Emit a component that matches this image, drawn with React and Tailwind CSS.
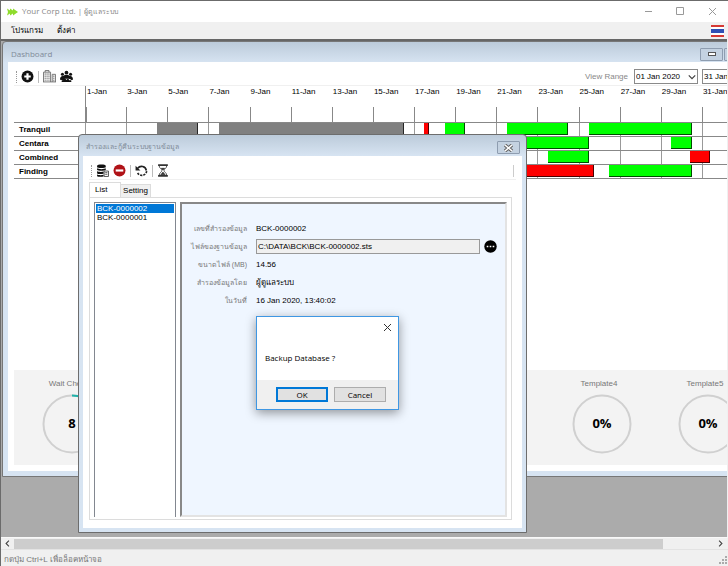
import React from 'react';

const days = ['1-Jan', '3-Jan', '5-Jan', '7-Jan', '9-Jan', '11-Jan', '13-Jan', '15-Jan', '17-Jan', '19-Jan', '21-Jan', '23-Jan', '25-Jan', '27-Jan', '29-Jan', '31-Jan'];

// from / to are days counted from the first column, the axis holds 32 days
const AXIS_DAYS = 32;
const rows = [
  {
    name: 'Tranquil',
    bars: [
      { from: 3.5, to: 5.5, color: 'bg-[#808080]' },
      { from: 6.5, to: 15.5, color: 'bg-[#808080]' },
      { from: 16.5, to: 16.75, color: 'bg-[#ff0000]' },
      { from: 17.5, to: 18.5, color: 'bg-[#00ff00]' },
      { from: 20.5, to: 23.5, color: 'bg-[#00ff00]' },
      { from: 24.5, to: 29.5, color: 'bg-[#00ff00]' },
    ],
  },
  {
    name: 'Centara',
    bars: [
      { from: 20.5, to: 24.5, color: 'bg-[#00ff00]' },
      { from: 28.5, to: 29.5, color: 'bg-[#00ff00]' },
    ],
  },
  {
    name: 'Combined',
    bars: [
      { from: 22.5, to: 24.5, color: 'bg-[#00ff00]' },
      { from: 29.4, to: 30.4, color: 'bg-[#ff0000]' },
    ],
  },
  {
    name: 'Finding',
    bars: [
      { from: 20.5, to: 24.75, color: 'bg-[#ff0000]' },
      { from: 25.5, to: 29.5, color: 'bg-[#00ff00]' },
    ],
  },
];

const gauges = [
  { label: 'Wait Check', value: '8', arc: 12 },
  {},
  {},
  {},
  {},
  { label: 'Template4', value: '0%', arc: 0 },
  { label: 'Template5', value: '0%', arc: 0 },
];

const Grip = () => <span className="h-3 border-l border-dotted border-[#999]" />;
const Separator = () => <span className="h-3 border-l border-[#bbb]" />;

const IconButton = ({ label, children }) => (
  <button aria-label={label} className="w-[13px] h-[13px] shrink-0">
    {children}
  </button>
);

const Logo = () => (
  <svg viewBox="0 0 22 16" className="w-[11px] h-2" fill="#8fdc2c">
    <path d="M0 1l6 4V1l6 4V1l10 7-10 7v-4l-6 4v-4l-6 4 2-7z" />
  </svg>
);

const AddIcon = () => (
  <svg viewBox="0 0 24 24" className="w-full h-full">
    <circle cx="12" cy="12" r="11" fill="#111" />
    <path d="M12 6v12M6 12h12" stroke="#fff" strokeWidth="4" />
  </svg>
);

const BuildingIcon = () => (
  <svg viewBox="0 0 24 24" className="w-full h-full" fill="none" stroke="#666" strokeWidth="1.6">
    <path d="M1 22V4h13v18M4 4V1h7v3M17 22V8h6v14M0 22h24" />
    <path d="M4 6v14M7.500 6v14M11 6v14M20 10v11" strokeDasharray="3 1" />
  </svg>
);

const PeopleIcon = () => (
  <svg viewBox="0 0 24 24" className="w-full h-full" fill="#111">
    <circle cx="12" cy="5" r="3.500" />
    <circle cx="4.500" cy="8" r="2.800" />
    <circle cx="19.500" cy="8" r="2.800" />
    <circle cx="8" cy="13" r="3" />
    <circle cx="16" cy="13" r="3" />
    <path d="M8 9h8v7H8zM0 18c0-5 2-7 5-7s4 1 4 4l-2 4zM24 18c0-5-2-7-5-7s-4 1-4 4l2 4zM3 22c0-5 2-6 5-6s4 2 4 3c0-1 1-3 4-3s5 1 5 6z" />
  </svg>
);

const DatabaseIcon = () => (
  <svg viewBox="0 0 24 24" className="w-full h-full">
    <path d="M2 3c0-3 16-3 16 0v3c0 2-16 2-16 0zM2 8c2 2 14 2 16 0v3c-1 2-15 2-16 0zM2 13c2 2 9 2 12 1v4C9 19 3 19 2 17zM2 19c2 2 8 2 12 1v3C9 24 3 24 2 22z" fill="#111" />
    <path d="M15 13h8v10h-8zM17 16h4M17 19h4" fill="#fff" stroke="#333" strokeWidth="1.500" />
  </svg>
);

const RemoveIcon = () => (
  <svg viewBox="0 0 24 24" className="w-full h-full">
    <circle cx="12" cy="12" r="11" fill="#b01217" />
    <path d="M5 12h14" stroke="#fff" strokeWidth="4" />
  </svg>
);

const RestoreIcon = () => (
  <svg viewBox="0 0 24 24" className="w-full h-full" fill="none" stroke="#222" strokeWidth="3">
    <path d="M5 8a9 9 0 0 1 16 4" />
    <path d="M21.500 13a9 9 0 0 1-17 3" strokeDasharray="4 2" />
    <path d="M1 3v9h9z" fill="#222" stroke="none" />
  </svg>
);

const HourglassIcon = () => (
  <svg viewBox="0 0 24 24" className="w-full h-full" fill="none" stroke="#333" strokeWidth="1.500">
    <path d="M2 2h18M2 22h18" strokeWidth="3" />
    <path d="M4 3c0 5 5 6 5 9s-5 4-5 9M18 3c0 5-5 6-5 9s5 4 5 9" />
    <path d="M8 8h6l-3 3zM7 20l4-5 4 5z" fill="#333" />
  </svg>
);

const MoreIcon = () => (
  <svg viewBox="0 0 24 24" className="w-full h-full">
    <circle cx="12" cy="12" r="11.500" fill="#000" />
    <path d="M5 10.500h3v3H5zM10.500 10.500h3v3h-3zM16 10.500h3v3h-3z" fill="#fff" />
  </svg>
);

const Chevron = ({ className }) => (
  <svg viewBox="0 0 10 10" className={className} fill="none" stroke="#444" strokeWidth="1.600">
    <path d="M1 3l4 4 4-4" />
  </svg>
);

const CrossGlyph = () => (
  <svg viewBox="0 0 9 8" className="w-[9px] h-2" fill="none" stroke="#666">
    <path d="M1 1l7 6M8 1L1 7" strokeWidth="3.500" />
    <path d="M1 1l7 6M8 1L1 7" stroke="#fff" strokeWidth="1.500" />
  </svg>
);

const FrameButton = ({ label, children }) => (
  <button aria-label={label} className="w-[23px] h-[13px] shrink-0 flex items-center justify-center border border-[#8e9db0] rounded-[1px] bg-[#c4d2e1]">
    {children}
  </button>
);

const DateSelect = ({ label, value }) => (
  <div className="relative w-16 h-[15px]">
    <select aria-label={label} defaultValue={value} className="block appearance-none w-full h-full border border-[#8a8a8a] bg-white pl-px text-[8px] leading-3 text-black">
      <option>{value}</option>
    </select>
    <Chevron className="absolute right-0.5 top-1 w-2 h-2 pointer-events-none" />
  </div>
);

const TitleBar = () => (
  <header className="h-[21px] flex items-center bg-white pl-1.5 text-[#888]">
    <Logo />
    <h1 className="ml-1 text-[8px] font-[Open_Sans,sans-serif]">
      Your Corp Ltd. | <span className="text-[7px]">ผู้ดูแลระบบ</span>
    </h1>
    <div className="ml-auto flex">
      <button aria-label="Minimize" className="w-8 flex justify-center">
        <svg viewBox="0 0 9 9" className="w-[9px] h-[9px]" stroke="#999"><path d="M1 4.500h7" /></svg>
      </button>
      <button aria-label="Maximize" className="w-8 flex justify-center">
        <svg viewBox="0 0 9 9" className="w-[9px] h-[9px]" fill="none" stroke="#999"><path d="M.5.5h7v7h-7z" /></svg>
      </button>
      <button aria-label="Close" className="w-8 flex justify-center">
        <svg viewBox="0 0 9 9" className="w-[9px] h-[9px]" stroke="#999"><path d="M1 1l7 7M8 1L1 8" /></svg>
      </button>
    </div>
  </header>
);

const MenuBar = () => (
  <nav className="h-[17px] flex items-center gap-3.5 bg-[#f0f0f0] pl-2.5 pr-1 text-[8px] text-black">
    <button>โปรแกรม</button>
    <button>ตั้งค่า</button>
    <button aria-label="Language" className="ml-auto">
      <svg viewBox="0 0 13 12" className="w-[13px] h-3">
        <path d="M0 0h13v12H0z" fill="#d63a35" />
        <path d="M0 2h13v8H0z" fill="#fff" />
        <path d="M0 4h13v4H0z" fill="#2f50b5" />
      </svg>
    </button>
  </nav>
);

const Gantt = () => (
  <div className="flex">
    <div className="w-[71px] shrink-0 pt-9 border-b border-[#888]">
      {rows.map((row) => (
        <div key={row.name} className="h-[14px] border-t border-[#888] pl-[5px] text-[8px] leading-[14px] font-bold text-black">
          {row.name}
        </div>
      ))}
    </div>
    <div className="relative w-[658px] shrink-0">
      <div className="h-9 grid grid-cols-16">
        {days.map((day) => (
          <div key={day} className="flex flex-col justify-between first:border-l border-[#888] text-black">
            <span className="pl-px text-[8px] leading-[11px]">{day}</span>
            <span className="h-[15px] border-l border-[#888]" />
          </div>
        ))}
      </div>
      <div className="relative border-b border-[#888]">
        <div className="absolute inset-0 grid grid-cols-16">
          {days.map((day) => (
            <span key={day} className="border-l border-[#999]" />
          ))}
        </div>
        {rows.map((row) => (
          <div key={row.name} className="relative h-[14px] border-t border-[#888]">
            {row.bars.map((bar) => (
              <div
                key={bar.from}
                className={`absolute top-0 h-3 border-r border-b border-black/70 ${bar.color}`}
                style={{ left: `${(bar.from / AXIS_DAYS) * 100}%`, width: `${((bar.to - bar.from) / AXIS_DAYS) * 100}%` }}
              />
            ))}
          </div>
        ))}
      </div>
    </div>
  </div>
);

const Gauge = ({ label, value, arc }) => (
  <div className="w-[106px] shrink-0 flex flex-col items-center pt-2">
    {label && (
      <>
        <span className="pr-1.5 text-[8px] leading-3 text-[#777]">{label}</span>
        <div className="relative mt-1 w-[60px] h-[60px] flex items-center justify-center">
          <svg viewBox="0 0 60 60" className="absolute inset-0" fill="none" strokeWidth="2">
            <circle cx="30" cy="30" r="28.500" stroke="#d0d0d0" />
            <circle cx="30" cy="30" r="28.500" stroke="#20b2aa" pathLength="100" strokeDasharray={`${arc} 100`} transform="rotate(-90 30 30)" />
          </svg>
          <span className="text-[13px] font-bold text-black font-[Open_Sans,sans-serif]">{value}</span>
        </div>
      </>
    )}
  </div>
);

const Dashboard = () => (
  <section className="absolute left-px right-[-50px] top-0 bottom-[60px] flex flex-col overflow-hidden rounded-t border border-[#777] bg-linear-to-b from-[#bccbda] to-[#d7e4f2] to-[21px] px-[5px] pb-[5px]">
    <div className="h-5 shrink-0 flex items-center gap-px pt-1 pl-[3px]">
      <h2 className="mr-auto text-[8px] text-[#7f8b98] font-[Open_Sans,sans-serif]">Dashboard</h2>
      <FrameButton label="Minimize"><span className="w-2 h-1 border border-[#555] bg-white" /></FrameButton>
      <FrameButton label="Maximize"><span className="w-2 h-2 border border-[#555] bg-white" /></FrameButton>
      <FrameButton label="Close"><CrossGlyph /></FrameButton>
    </div>
    <div className="flex-1 flex flex-col bg-white pl-1.5">
      <div className="h-6 shrink-0 flex items-center gap-1 border-b border-[#f0f0f0] pt-1.5 pl-0.5 pr-[5px]">
        <Grip />
        <IconButton label="Add"><AddIcon /></IconButton>
        <Separator />
        <IconButton label="Rooms"><BuildingIcon /></IconButton>
        <IconButton label="Guests"><PeopleIcon /></IconButton>
        <span className="ml-auto mr-0.5 text-[8px] text-[#888]">View Range</span>
        <DateSelect label="From" value="01 Jan 2020" />
        <DateSelect label="To" value="31 Jan 2020" />
      </div>
      <Gantt />
      <div className="mt-auto mb-1.5 h-[95px] flex bg-[#f3f3f3] pl-[5px]">
        {gauges.map((gauge, i) => (
          <Gauge key={i} {...gauge} />
        ))}
      </div>
    </div>
  </section>
);

const Field = ({ label, children }) => (
  <div className="flex items-center gap-[9px] h-[15px]">
    <dt className="w-[65px] shrink-0 text-right whitespace-nowrap text-[7px] text-[#777]">{label}</dt>
    <dd className="flex-1 flex items-center gap-1 text-black">{children}</dd>
  </div>
);

const BackupWindow = () => (
  <section className="absolute left-[77px] top-[93px] bottom-1 w-[449px] flex flex-col rounded-t border border-[#6d6d6d] bg-linear-to-b from-[#bccbda] to-[#d7e4f2] to-[21px] px-1 pb-1">
    <div className="h-[21px] shrink-0 flex items-center justify-between pt-1 pl-[3px] pr-0.5">
      <h2 className="text-[7px] text-[#7f8b98]">สำรองและกู้คืนระบบฐานข้อมูล</h2>
      <FrameButton label="Close"><CrossGlyph /></FrameButton>
    </div>
    <div className="flex-1 flex flex-col bg-white px-1.5 pb-2">
      <div className="h-6 shrink-0 flex items-center gap-1 border-b border-[#f0f0f0] pt-1.5 pl-0.5">
        <Grip />
        <IconButton label="Backup"><DatabaseIcon /></IconButton>
        <IconButton label="Delete"><RemoveIcon /></IconButton>
        <Separator />
        <IconButton label="Restore"><RestoreIcon /></IconButton>
        <Separator />
        <IconButton label="Schedule"><HourglassIcon /></IconButton>
        <span className="ml-auto mr-0.5 h-3 border-r border-[#ccc]" />
      </div>
      <div role="tablist" className="mt-0.5 flex items-end text-[8px] leading-3 text-black">
        <button role="tab" aria-selected="true" className="w-8 h-[15px] border border-b-0 border-[#dcdcdc] bg-white pl-[5px] text-left">List</button>
        <button role="tab" aria-selected="false" className="w-[30px] h-[13px] border border-b-0 border-l-0 border-[#dcdcdc] bg-[#f0f0f0]">Setting</button>
      </div>
      <div className="flex-1 mr-1 flex gap-1 border border-[#dcdcdc] pl-1 pt-1 pr-1 pb-0.5">
        <ul className="w-[82px] shrink-0 border border-b-0 border-[#828790] p-px text-[8px] leading-[9px] text-black">
          <li className="bg-[#0078d7] text-white pl-px">BCK-0000002</li>
          <li className="pl-px">BCK-0000001</li>
        </ul>
        <dl className="flex-1 flex flex-col gap-[3px] border-2 border-[#888] border-r-[#e3e3e3] border-b-[#e3e3e3] bg-[#eff6ff] pt-[17px] text-[8px] leading-3">
          <Field label="เลขที่สำรองข้อมูล">BCK-0000002</Field>
          <Field label={<label htmlFor="file">ไฟล์ของฐานข้อมูล</label>}>
            <input id="file" readOnly defaultValue="C:\DATA\BCK\BCK-0000002.sts" className="w-[224px] h-[15px] border border-[#999] bg-[#f0f0f0] px-px" />
            <IconButton label="Browse"><MoreIcon /></IconButton>
          </Field>
          <Field label="ขนาดไฟล์ (MB)">14.56</Field>
          <Field label="สำรองข้อมูลโดย">ผู้ดูแลระบบ</Field>
          <Field label="ในวันที่">16 Jan 2020, 13:40:02</Field>
        </dl>
      </div>
    </div>
  </section>
);

const ConfirmBox = () => (
  <div role="dialog" aria-label="Backup Database" className="absolute left-[255px] top-[275px] w-[143px] border border-[#3f97e3] bg-white shadow-[0_3px_10px_rgba(0,0,0,0.4)] text-[8px] text-black font-[Open_Sans,sans-serif]">
    <div className="flex justify-end pt-1.5 pr-1.5">
      <button aria-label="Close">
        <svg viewBox="0 0 9 9" className="block w-[9px] h-[9px]" stroke="#333"><path d="M1 1l7 7M8 1L1 8" /></svg>
      </button>
    </div>
    <p className="pt-5 pb-4 pl-2 leading-3">Backup Database ?</p>
    <div className="flex justify-end gap-1.5 bg-[#f0f0f0] py-[7px] pr-3 leading-[11px]">
      <button className="w-[52px] h-[15px] border-2 border-[#0078d7] bg-[#e1e1e1]">OK</button>
      <button className="w-[52px] h-[15px] border border-[#adadad] bg-[#e1e1e1]">Cancel</button>
    </div>
  </div>
);

const App = () => {
  return (
    <div className="min-h-screen flex flex-col border-t border-l border-[#6b6b6b] bg-[#f0f0f0] font-[Liberation_Sans,sans-serif]">
      <TitleBar />
      <MenuBar />
      <main className="relative flex-1 mr-px overflow-hidden border-t-2 border-[#666] bg-[#ababab]">
        <Dashboard />
        <BackupWindow />
        <ConfirmBox />
      </main>
      <div className="h-3 flex items-center border-t border-[#f8f8f8] bg-[#f0f0f0]">
        <button aria-label="Scroll left" className="w-[13px] flex justify-center"><Chevron className="w-[7px] h-[7px] rotate-90" /></button>
        <div className="flex-1 h-[10px]"><div className="w-[93%] h-full bg-[#cdcdcd]" /></div>
        <button aria-label="Scroll right" className="w-4 flex justify-center"><Chevron className="w-[7px] h-[7px] -rotate-90" /></button>
      </div>
      <footer className="h-[17px] flex items-center justify-between border-t border-[#e3e3e3] pt-1 pl-[3px] text-[8px] text-[#777]">
        <span>กดปุ่ม Ctrl+L เพื่อล็อคหน้าจอ</span>
        <svg viewBox="0 0 9 9" className="w-[9px] h-[9px]" fill="#aaa">
          <path d="M6 0h2v2H6zM3 3h2v2H3zM6 3h2v2H6zM0 6h2v2H0zM3 6h2v2H3zM6 6h2v2H6z" />
        </svg>
      </footer>
    </div>
  );
};

export default App;
